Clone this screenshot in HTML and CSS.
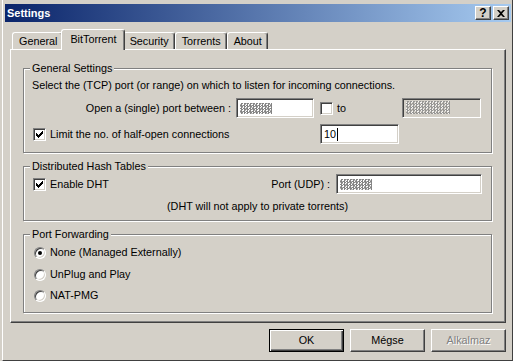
FILE: index.html
```html
<!DOCTYPE html>
<html lang="en">
  <head>
    <meta charset="UTF-8" />
    <title>Settings</title>
    <link rel="stylesheet" href="styles.css">
  </head>
  <body>
    <div class="window">
      <!-- Title bar -->
      <div class="titlebar">
        <span class="title">Settings</span>
        <div class="caption-buttons">
          <span class="caption-btn help">?</span>
          <span class="caption-btn close">
            <svg width="8" height="7" viewBox="0 0 8 7"><path d="M0 0h2l2 2 2-2h2L5 3.5 8 7H6L4 5 2 7H0l3-3.5z" fill="#000" /></svg>
          </span>
        </div>
      </div>

      <div class="client">
        <!-- Tabs -->
        <div class="tabs">
          <div class="tab">General</div>
          <div class="tab selected">BitTorrent</div>
          <div class="tab">Security</div>
          <div class="tab">Torrents</div>
          <div class="tab">About</div>
        </div>

        <div class="panel">
          <fieldset class="group group-general">
            <legend>General Settings</legend>
            <div class="line">Select the (TCP) port (or range) on which to listen for incoming connections.</div>
            <div class="row port-row">
              <span class="port-label">Open a (single) port between :</span>
              <span class="input input-port"><span class="noise"></span></span>
              <span class="checkbox"></span>
              <span class="to">to</span>
              <span class="input input-disabled"><span class="noise noise-light"></span></span>
            </div>
            <div class="row">
              <span class="check-label">
                <span class="checkbox">
                  <svg width="7" height="7" viewBox="0 0 7 7"><path d="M0 2H1V3H2V4H3V3H4V2H5V1H6V0H7V3H6V4H5V5H4V6H3V7H2V6H1V5H0Z" fill="#000" /></svg>
                </span>
                Limit the no. of half-open connections
              </span>
              <span class="input input-half">10<span class="caret"></span></span>
            </div>
          </fieldset>

          <fieldset class="group group-dht">
            <legend>Distributed Hash Tables</legend>
            <div class="row">
              <span class="check-label">
                <span class="checkbox">
                  <svg width="7" height="7" viewBox="0 0 7 7"><path d="M0 2H1V3H2V4H3V3H4V2H5V1H6V0H7V3H6V4H5V5H4V6H3V7H2V6H1V5H0Z" fill="#000" /></svg>
                </span>
                Enable DHT
              </span>
              <span class="udp-label">Port (UDP) :</span>
              <span class="input input-udp"><span class="noise"></span></span>
            </div>
            <div class="line centered">(DHT will not apply to private torrents)</div>
          </fieldset>

          <fieldset class="group group-forward">
            <legend>Port Forwarding</legend>
            <div class="radio-row first"><span class="radio checked"></span>None (Managed Externally)</div>
            <div class="radio-row second"><span class="radio"></span>UnPlug and Play</div>
            <div class="radio-row third"><span class="radio"></span>NAT-PMG</div>
          </fieldset>
        </div>

        <!-- Dialog buttons -->
        <div class="buttons">
          <span class="button default">OK</span>
          <span class="button">Mégse</span>
          <span class="button disabled">Alkalmaz</span>
        </div>
      </div>
    </div>
  </body>
</html>
```

FILE: styles.css
```css
body {
  margin: 0;
  background: #d4d0c8;
  font-family: "Liberation Sans", Arial, sans-serif;
  font-size: 10.8px;
  line-height: 13px;
  color: #000;
  overflow: hidden;
}

.window {
  height: 361px;
  box-sizing: border-box;
  margin-left: 2px;
  padding: 4px 1px 0 2px;
  border-left: 1px solid #fff;
  border-right: 1px solid #404040;
  border-bottom: 1px solid #404040;
}

.titlebar {
  height: 18px;
  display: flex;
  align-items: center;
  justify-content: space-between;
  padding: 0 2px;
  background: linear-gradient(to right, #0a246a, #a6caf0);
}

.title {
  color: #fff;
  font-weight: bold;
  font-size: 11px;
}

.caption-buttons {
  display: flex;
  gap: 2px;
}

.caption-btn {
  width: 16px;
  height: 14px;
  box-sizing: border-box;
  display: flex;
  align-items: center;
  justify-content: center;
  background: #d4d0c8;
  border: 1px solid;
  border-color: #fff #404040 #404040 #fff;
  box-shadow: inset -1px -1px #808080;
  font-weight: bold;
  font-size: 12px;
}

.client {
  padding: 7px 5px 0 5px;
}

/* Tabs */
.tabs {
  display: flex;
  align-items: flex-end;
  height: 20px;
  padding-left: 2px;
}

.tab {
  height: 17px;
  box-sizing: border-box;
  padding: 2px 5px 0 6px;
  border: 1px solid;
  border-bottom: none;
  border-color: #fff #404040 #fff #fff;
  border-radius: 3px 3px 0 0;
  box-shadow: inset -1px 0 #808080;
}

.tab.selected {
  height: 21px;
  margin: 0 -2px -1px;
  padding: 3px 7px 0 8px;
  position: relative;
  z-index: 1;
  background: #d4d0c8;
}

.panel {
  height: 274px;
  box-sizing: border-box;
  padding: 12px 13px 0 12px;
  border: 1px solid;
  border-color: #fff #404040 #404040 #fff;
  box-shadow: inset -1px -1px #808080;
}

/* Group boxes */
.group {
  margin: 0 0 7px;
  padding: 0 8px;
  min-width: 0;
  box-sizing: border-box;
  border: 1px solid #808080;
  box-shadow: inset 1px 1px #fff, 1px 1px #fff;
}

.group legend {
  margin-left: -2px;
  padding: 0 2px;
  background: #d4d0c8;
}

.group-general {
  height: 91px;
}

.group-dht {
  height: 61px;
}

.group-forward {
  height: 85px;
}

.line {
  margin-top: 4px;
}

.group-dht .line {
  margin-top: 6px;
}

.centered {
  text-align: center;
}

.row {
  display: flex;
  align-items: center;
  height: 20px;
  margin-top: 6px;
}

.group-dht .row {
  margin-top: 1px;
}

.port-label {
  width: 199px;
  margin-right: 5px;
  text-align: right;
}

.check-label {
  width: 288px;
  display: flex;
  align-items: center;
  gap: 4px;
  padding-left: 1px;
  box-sizing: border-box;
}

.group-dht .check-label {
  width: auto;
  margin-right: auto;
}

.udp-label {
  margin-right: 6px;
}

/* Sunken controls */
.input,
.checkbox {
  box-sizing: border-box;
  background: #fff;
  border: 1px solid;
  border-color: #808080 #fff #fff #808080;
  box-shadow: inset 1px 1px #404040, inset -1px -1px #d4d0c8;
}

.input {
  height: 20px;
  display: flex;
  align-items: center;
  padding-left: 3px;
}

.input-port {
  width: 78px;
}

.input-disabled {
  width: 79px;
  margin-left: auto;
  margin-right: 2px;
  align-items: flex-start;
  padding-top: 2px;
  background: #d4d0c8;
}

.input-half {
  width: 79px;
}

.input-udp {
  width: 146px;
  margin-right: 1px;
}

.caret {
  width: 1px;
  height: 13px;
  margin-left: 1px;
  background: #000;
}

/* blurred-out values */
.noise {
  width: 32px;
  height: 11px;
  background:
    repeating-conic-gradient(#333 0 25%, transparent 0 50%) 0 0 / 3px 3px,
    repeating-conic-gradient(transparent 0 25%, #888 0 50%) 1px 0 / 5px 2px;
  opacity: 0.6;
}

.noise-light {
  width: 44px;
  height: 13px;
  background:
    repeating-conic-gradient(#888 0 25%, transparent 0 50%) 0 0 / 3px 3px,
    repeating-conic-gradient(transparent 0 25%, #fff 0 50%) 1px 0 / 5px 2px;
  opacity: 0.8;
}

.checkbox {
  width: 13px;
  height: 13px;
  flex: none;
  display: flex;
  align-items: center;
  justify-content: center;
}

.port-row .checkbox {
  margin-left: 6px;
}

.to {
  margin-left: 4px;
}

/* Radio buttons */
.radio-row {
  display: flex;
  align-items: center;
  gap: 4px;
  height: 13px;
  padding-left: 2px;
}

.radio-row.first {
  margin-top: 5px;
}

.radio-row.second {
  margin-top: 9px;
}

.radio-row.third {
  margin-top: 8px;
}

.radio {
  width: 12px;
  height: 12px;
  box-sizing: border-box;
  border-radius: 50%;
  background: #fff;
  border: 1px solid;
  border-color: #808080 #fff #fff #808080;
  box-shadow: inset 1px 1px #404040, inset -1px -1px #d4d0c8;
  display: flex;
  align-items: center;
  justify-content: center;
}

.radio.checked::after {
  content: "";
  width: 4px;
  height: 4px;
  border-radius: 50%;
  background: #000;
}

/* Dialog buttons */
.buttons {
  display: flex;
  justify-content: flex-end;
  gap: 6px;
  margin-top: 6px;
}

.button {
  width: 75px;
  height: 23px;
  box-sizing: border-box;
  display: flex;
  align-items: center;
  justify-content: center;
  border: 1px solid;
  border-color: #fff #404040 #404040 #fff;
  box-shadow: inset -1px -1px #808080;
}

.button.default {
  border-color: #000;
  box-shadow: inset 1px 1px #fff, inset -1px -1px #404040, inset -2px -2px #808080;
}

.button.disabled {
  color: #808080;
  text-shadow: 1px 1px #fff;
}
```
